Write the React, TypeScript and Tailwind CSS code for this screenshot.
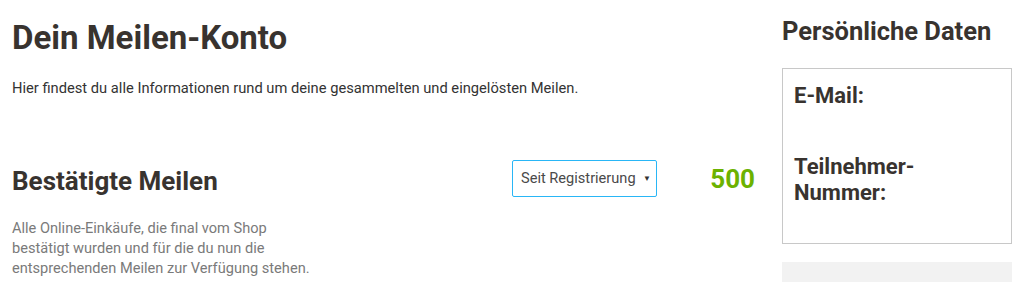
import React from "react";

export default function App() {
  return (
    <div className="w-[1024px] h-[282px] overflow-hidden bg-white flex px-3 gap-[27px]" style={{ fontFamily: "Roboto, 'Noto Sans', sans-serif" }}>
      <div className="flex-1 flex flex-col">
        <h1 className="shrink-0 mt-[18px] text-[33px] leading-[40px] font-bold text-[#38332f]">Dein Meilen-Konto</h1>
        <p className="shrink-0 mt-[20px] text-[14.7px] leading-[20px] text-[#333]">
          Hier findest du alle Informationen rund um deine gesammelten und eingelösten Meilen.
        </p>
        <div className="shrink-0 mt-[62px] flex items-start">
          <div className="w-[500px]">
            <h2 className="mt-[5px] text-[26px] leading-[32px] font-bold text-[#38332f]">Bestätigte Meilen</h2>
            <p className="mt-[21px] w-[300px] text-[14.6px] leading-[20px] text-[#7a7a7a]">
              Alle Online-Einkäufe, die final vom Shop bestätigt wurden und für die du nun die entsprechenden Meilen zur Verfügung stehen.
            </p>
          </div>
          <div className="w-[145px] h-[37px] border border-[#29b6f6] rounded-[2px] flex items-center justify-between pl-[8px] pr-[5px] text-[14.6px] text-[#4a4a4a]">
            <span>Seit Registrierung</span>
            <span className="text-[8px] text-[#333]">▼</span>
          </div>
          <div className="flex-1 text-right mt-[3px] text-[26px] leading-[32px] font-bold text-[#6cb200]">500</div>
        </div>
      </div>
      <div className="w-[230px] flex flex-col">
        <h2 className="shrink-0 mt-[15px] text-[25.5px] leading-[32px] font-bold text-[#38332f]">Persönliche Daten</h2>
        <div className="shrink-0 mt-[21px] h-[176px] border border-[#c8c8c8] px-[11px] pt-[14px] text-[22px] leading-[26px] font-bold text-[#38332f]">
          <div>E-Mail:</div>
          <div className="mt-[45px]">Teilnehmer-<br />Nummer:</div>
        </div>
        <div className="shrink-0 mt-[18px] h-[30px] bg-[#f2f2f2]"></div>
      </div>
    </div>
  );
}
